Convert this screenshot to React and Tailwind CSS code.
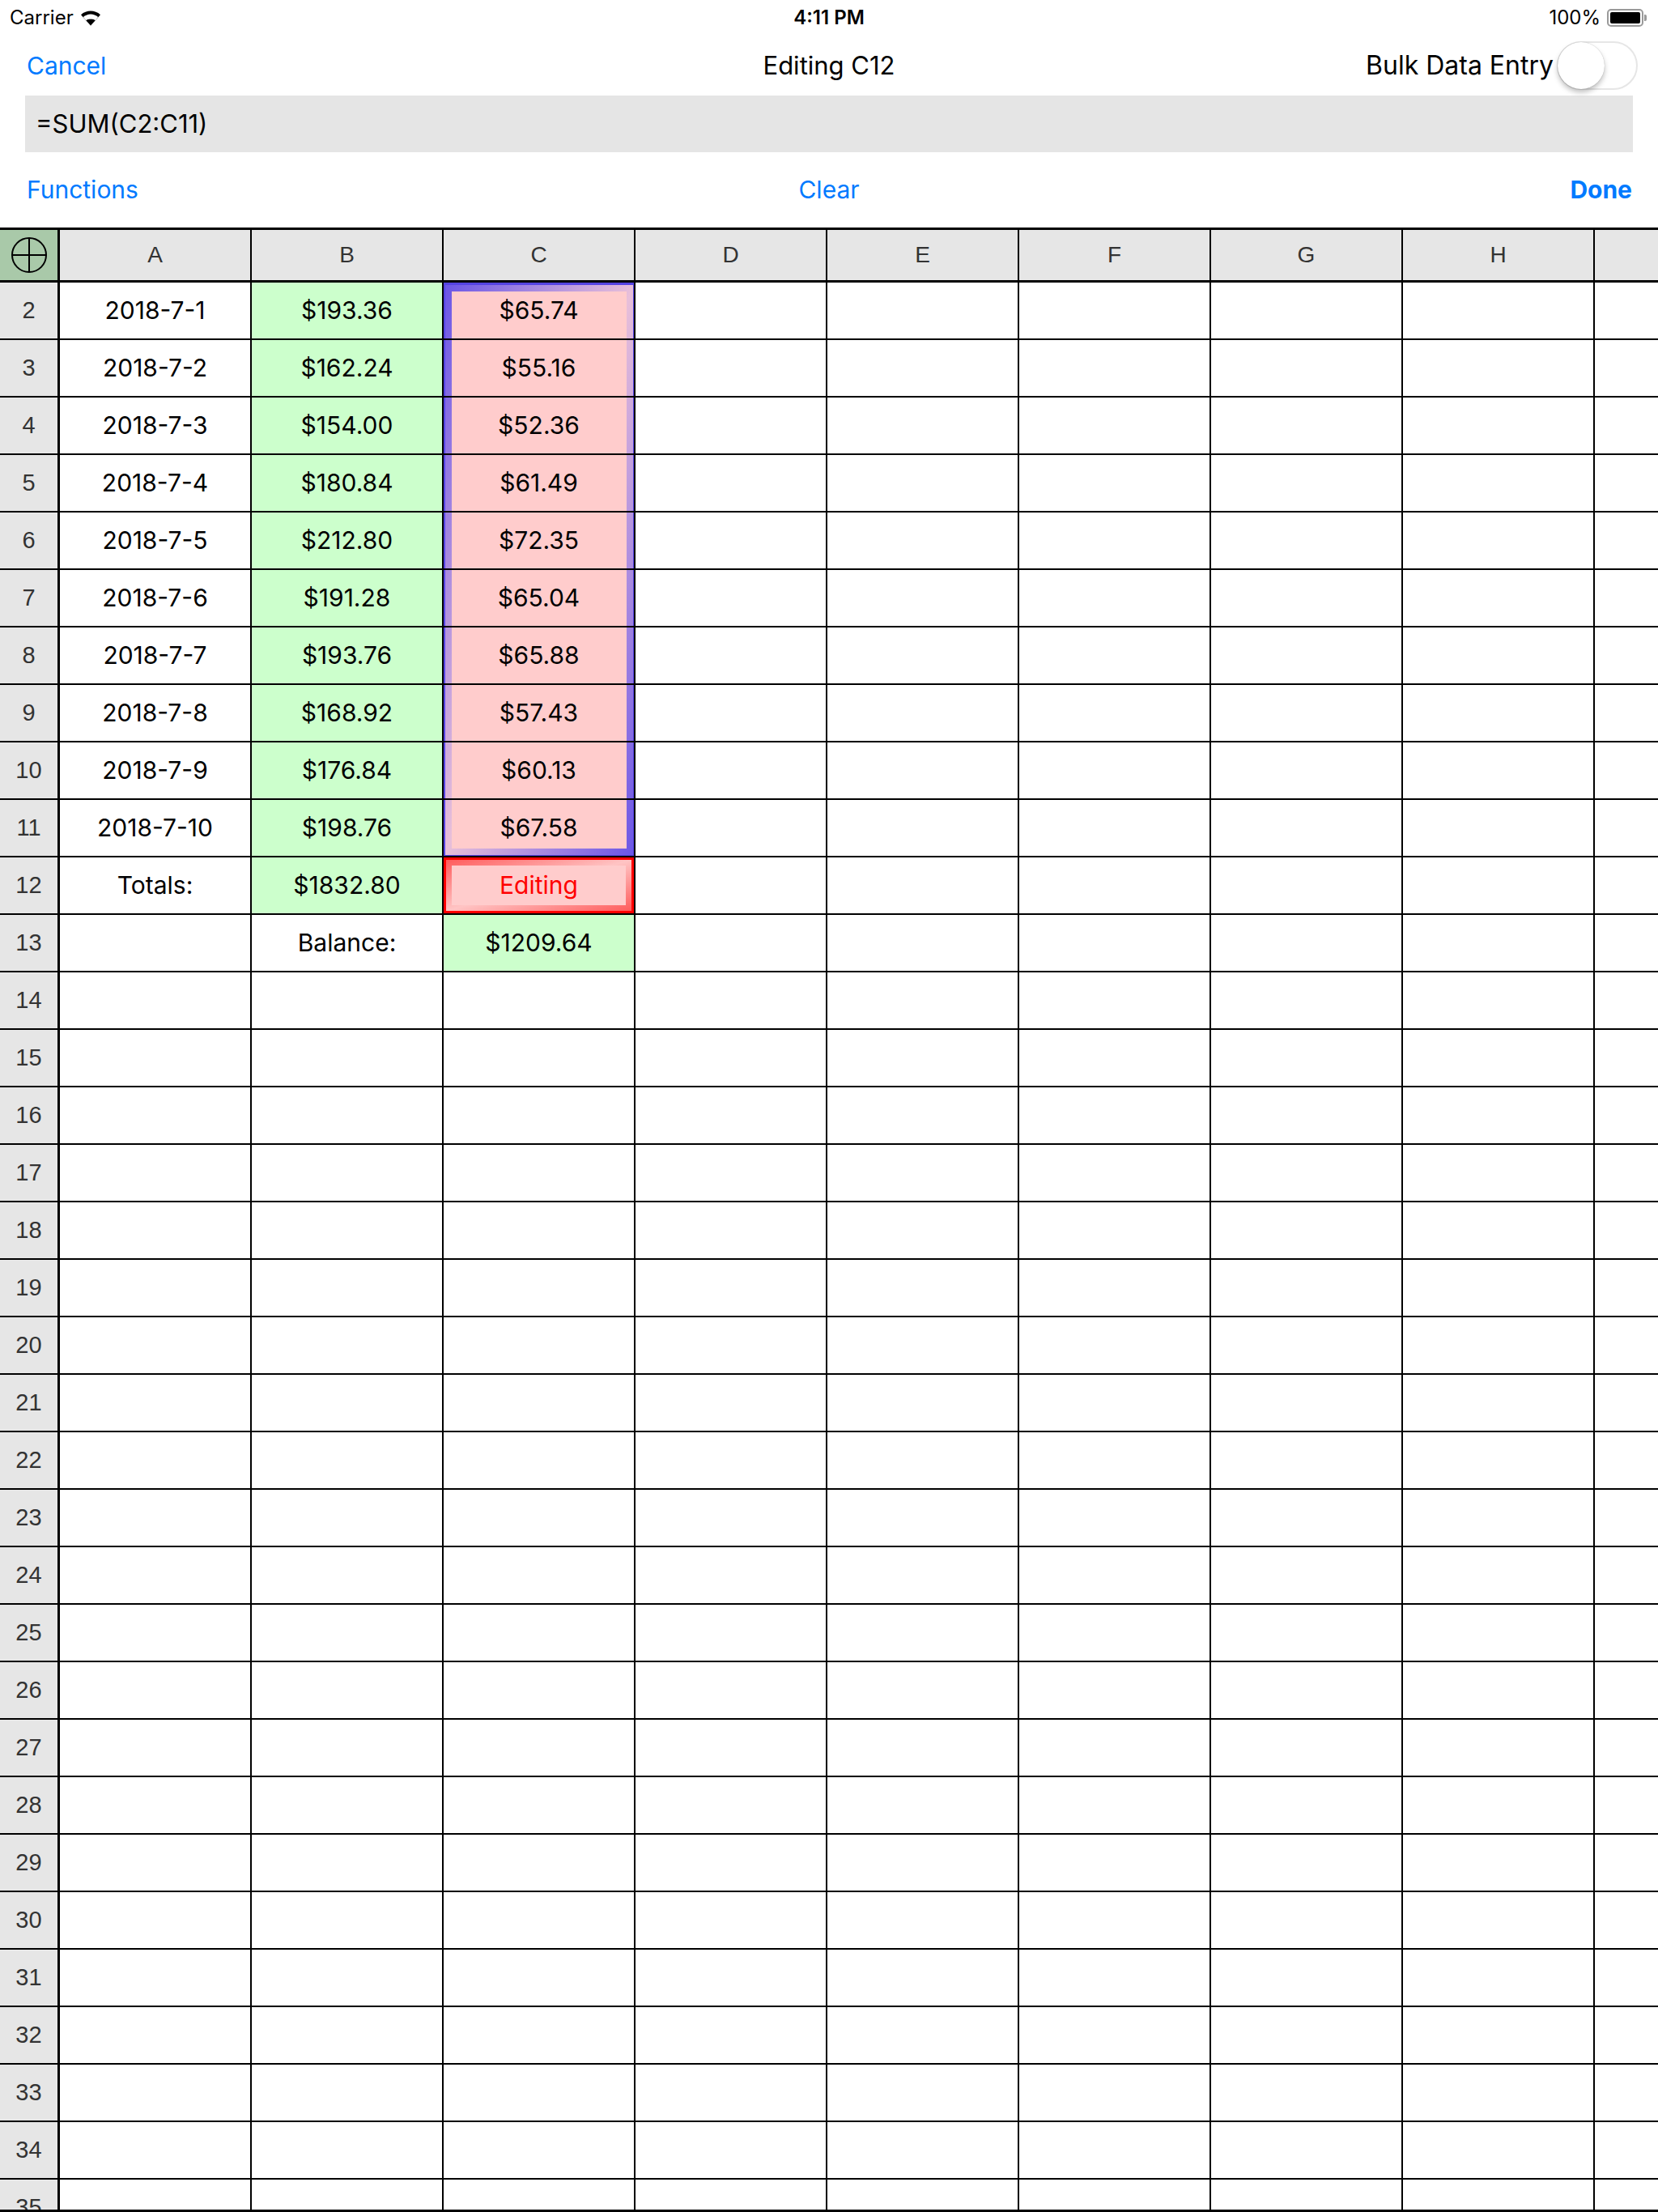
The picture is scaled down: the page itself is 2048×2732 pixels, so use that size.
import React from 'react';

const COLS = ['A', 'B', 'C', 'D', 'E', 'F', 'G', 'H'];

// rows 2..11 : date, income, 34%
const DATA = [
  ['2018-7-1', '$193.36', '$65.74'],
  ['2018-7-2', '$162.24', '$55.16'],
  ['2018-7-3', '$154.00', '$52.36'],
  ['2018-7-4', '$180.84', '$61.49'],
  ['2018-7-5', '$212.80', '$72.35'],
  ['2018-7-6', '$191.28', '$65.04'],
  ['2018-7-7', '$193.76', '$65.88'],
  ['2018-7-8', '$168.92', '$57.43'],
  ['2018-7-9', '$176.84', '$60.13'],
  ['2018-7-10', '$198.76', '$67.58'],
];

const buildRows = () => {
  const rows = [];
  for (let n = 2; n <= 36; n++) {
    const cells = COLS.map(() => ({ text: '', bg: '' }));
    if (n <= 11) {
      const d = DATA[n - 2];
      cells[0] = { text: d[0], bg: '' };
      cells[1] = { text: d[1], bg: 'bg-[#ccffcc]' };
      cells[2] = { text: d[2], bg: 'bg-transparent' };
    } else if (n === 12) {
      cells[0] = { text: 'Totals:', bg: '' };
      cells[1] = { text: '$1832.80', bg: 'bg-[#ccffcc]' };
      cells[2] = { editing: true };
    } else if (n === 13) {
      cells[1] = { text: 'Balance:', bg: '' };
      cells[2] = { text: '$1209.64', bg: 'bg-[#ccffcc]' };
    }
    rows.push({ n, cells });
  }
  return rows;
};

const Wifi = () => (
  <svg width="26" height="20" viewBox="0 0 26 20" className="ml-[8px]">
    <path d="M13 19.5 L1 6.2 C7.8 0 18.2 0 25 6.2 Z" fill="#000" />
    <path d="M13 19.5 L5.4 11 C9.6 7.4 16.4 7.4 20.6 11 Z" fill="#fff" />
    <path d="M13 19.5 L7.4 13.2 C10.6 10.6 15.4 10.6 18.6 13.2 Z" fill="#000" />
    <path d="M5.9 11.5 L3.8 9.1 C9.4 4.3 16.6 4.3 22.2 9.1 L20.1 11.5 Z" fill="#fff" />
  </svg>
);

const Battery = () => (
  <div className="flex items-center ml-[8px]">
    <div className="w-[45px] h-[22px] rounded-[5px] border-2 border-[#9a9a9a] p-[2px]">
      <div className="w-full h-full bg-black rounded-[2px]" />
    </div>
    <div className="w-[3px] h-[8px] bg-[#9a9a9a] rounded-r-[2px] ml-[1px]" />
  </div>
);

const Crosshair = () => (
  <svg width="46" height="46" viewBox="0 0 46 46">
    <circle cx="23" cy="23" r="21" fill="none" stroke="#000" strokeWidth="2" />
    <line x1="23" y1="2" x2="23" y2="44" stroke="#000" strokeWidth="2" />
    <line x1="2" y1="23" x2="44" y2="23" stroke="#000" strokeWidth="2" />
  </svg>
);

const App = () => {
  const rows = buildRows();

  return (
    <div className="w-[2048px] h-[2732px] overflow-hidden bg-white flex flex-col border-b-[3px] border-black font-['Inter',sans-serif] text-black">
      {/* status bar */}
      <div className="h-[44px] shrink-0 relative flex items-center justify-between px-[12px] text-[24px]">
        <div className="flex items-center">
          <span>Carrier</span>
          <Wifi />
        </div>
        <span className="absolute left-1/2 -translate-x-1/2 font-semibold">4:11 PM</span>
        <div className="flex items-center pr-[2px]">
          <span>100%</span>
          <Battery />
        </div>
      </div>

      {/* nav */}
      <div className="h-[74px] shrink-0 relative flex items-center justify-between pl-[33px] pr-[25px]">
        <span className="text-[30px] text-[#007aff]">Cancel</span>
        <span className="absolute left-1/2 -translate-x-1/2 text-[31px]">Editing C12</span>
        <div className="flex items-center">
          <span className="text-[32px] mr-[4px]">Bulk Data Entry</span>
          <div className="relative w-[100px] h-[60px] rounded-full border-2 border-[#e6e6e6] bg-white">
            <div className="absolute left-[-1px] top-[-1px] w-[58px] h-[58px] rounded-full bg-white shadow-[0_4px_6px_rgba(0,0,0,0.25),0_0_1px_rgba(0,0,0,0.3)]" />
          </div>
        </div>
      </div>

      {/* formula */}
      <div className="h-[70px] shrink-0 mx-[31px] bg-[#e5e5e5] flex items-center pl-[13px] text-[31px]">
        =SUM(C2:C11)
      </div>

      {/* actions */}
      <div className="h-[93px] shrink-0 relative flex items-center justify-between pl-[33px] pr-[32px] text-[30px] text-[#007aff]">
        <span>Functions</span>
        <span className="absolute left-1/2 -translate-x-1/2">Clear</span>
        <span className="font-bold">Done</span>
      </div>

      {/* column header */}
      <div className="h-[68px] shrink-0 flex border-y-[3px] border-black bg-[#e6e6e6] font-['Liberation_Sans',sans-serif] text-[28px] text-[#333]">
        <div className="w-[74px] shrink-0 border-r-[3px] border-black bg-[#a9c9a9] flex items-center justify-center">
          <Crosshair />
        </div>
        {COLS.map((c) => (
          <div key={c} className="w-[237px] shrink-0 border-r-2 border-black flex items-center justify-center">
            {c}
          </div>
        ))}
        <div className="flex-1" />
      </div>

      {/* body */}
      <div className="relative flex-1 overflow-hidden">
        {/* selection C2:C11 */}
        <div className="absolute left-[547px] top-0 w-[238px] h-[710px] border-[3px] border-[#5443e2] bg-[linear-gradient(to_bottom_right,#6b56e6,#e8bfd9,#6b56e6)] p-[8px]">
          <div className="w-full h-full bg-[#ffcccc]" />
        </div>

        {rows.map((r) => (
          <div key={r.n} className="relative flex h-[71px] border-b-2 border-black">
            <div className="w-[74px] shrink-0 border-r-[3px] border-black bg-[#e6e6e6] flex items-center justify-center font-['Liberation_Sans',sans-serif] text-[29px] text-[#333]">
              {r.n}
            </div>
            {r.cells.map((cell, i) =>
              cell.editing ? (
                <div key={i} className="w-[237px] shrink-0 border-r-2 border-black">
                  <div className="w-full h-full border-[3px] border-[#ff0000] bg-[linear-gradient(to_bottom_right,#ff5c5c,#ffc4c4,#ff5c5c)] p-[7px]">
                    <div className="w-full h-full bg-[#ffcccc] flex items-center justify-center text-[30px] text-[#ff0000]">
                      Editing
                    </div>
                  </div>
                </div>
              ) : (
                <div
                  key={i}
                  className={`w-[237px] shrink-0 border-r-2 border-black flex items-center justify-center text-[30px] ${cell.bg}`}
                >
                  {cell.text}
                </div>
              )
            )}
            <div className="flex-1" />
          </div>
        ))}
      </div>
    </div>
  );
};

export default App;
